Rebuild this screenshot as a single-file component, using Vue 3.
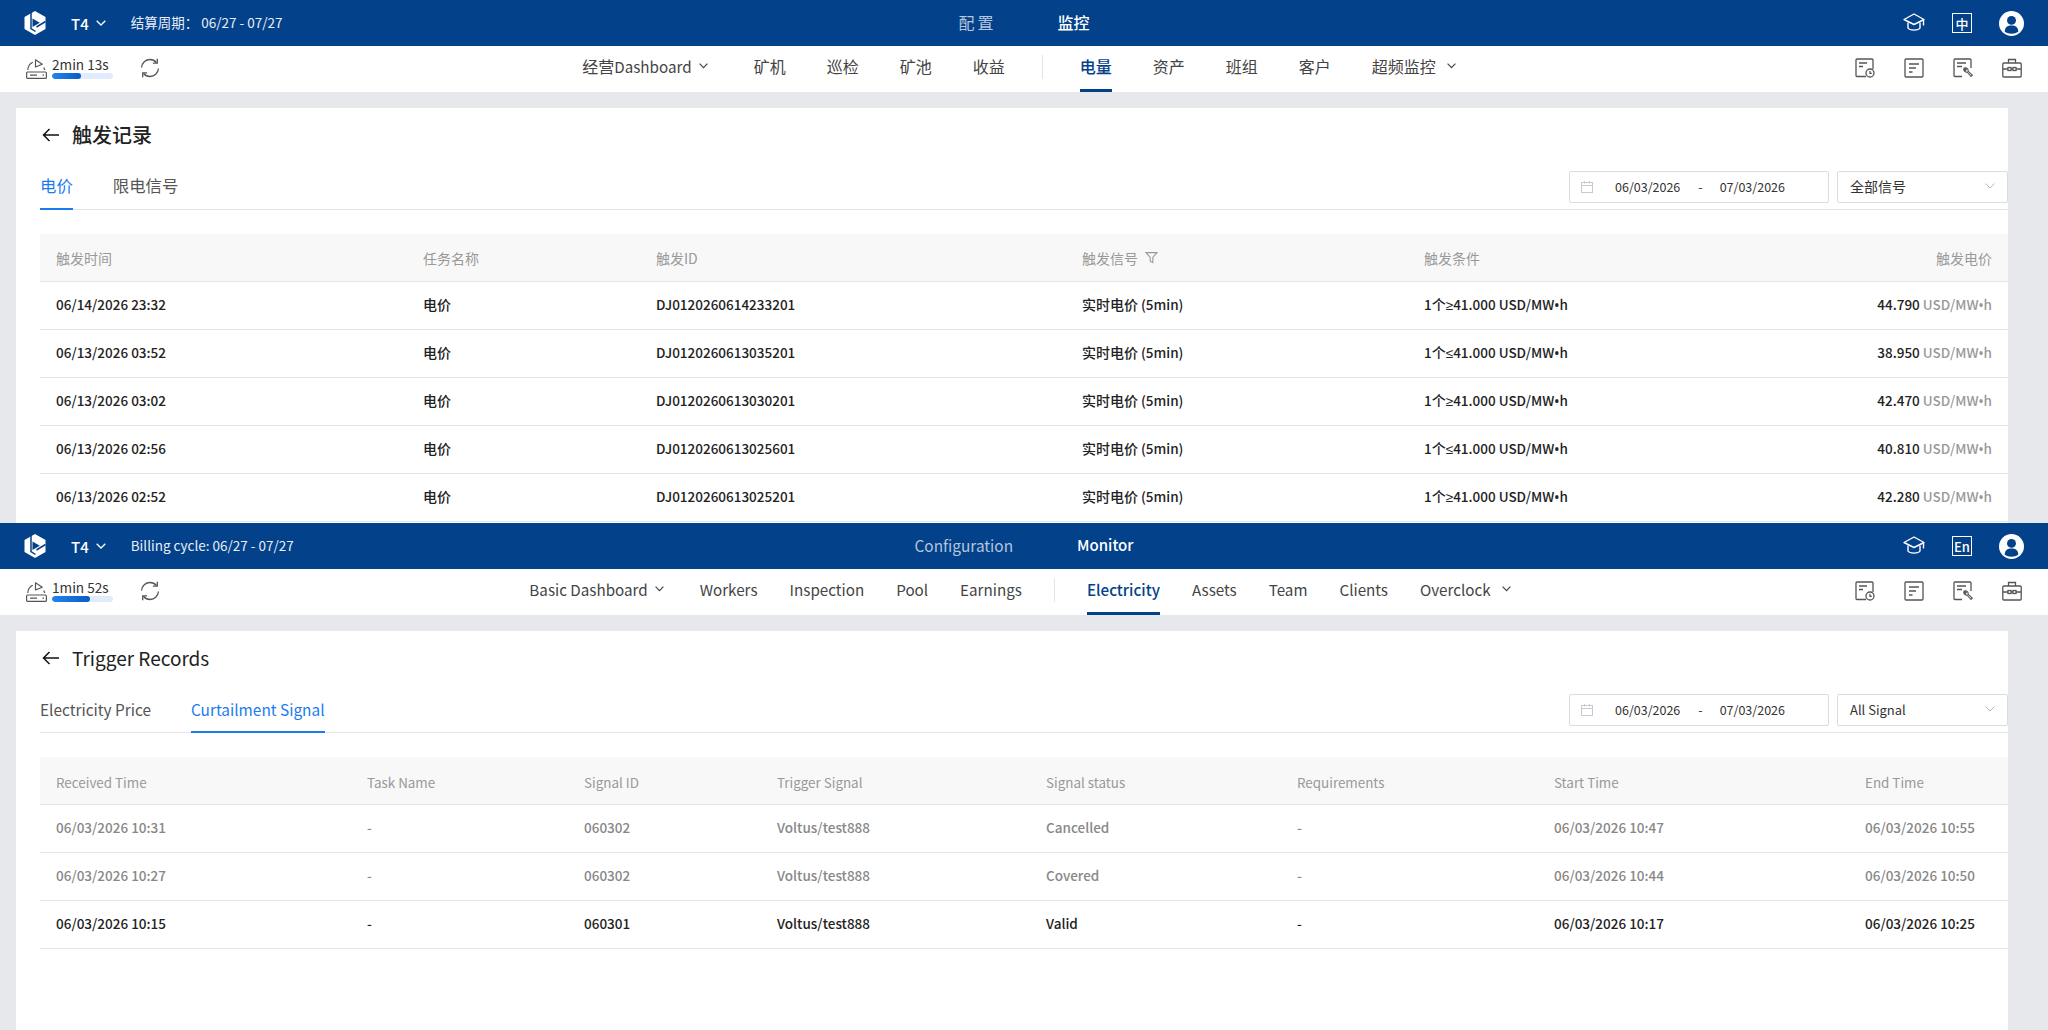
<script setup>
const navIcons = ['clock', 'list', 'wrench', 'case']

const pricePanel = {
  key: 'zh',
  billing: '结算周期： 06/27 - 07/27',
  lang: '中',
  timer: '2min 13s',
  progress: 47,
  topTabs: ['配置', '监控'],
  navLeft: [
    { label: '经营Dashboard', arrow: true },
    { label: '矿机' },
    { label: '巡检' },
    { label: '矿池' },
    { label: '收益' }
  ],
  navRight: [
    { label: '电量', active: true },
    { label: '资产' },
    { label: '班组' },
    { label: '客户' },
    { label: '超频监控', arrow: true, wide: true }
  ],
  title: '触发记录',
  tabs: ['电价', '限电信号'],
  activeTab: 0,
  select: '全部信号',
  gridClass: 'grid-price',
  columns: ['触发时间', '任务名称', '触发ID', '触发信号', '触发条件', '触发电价'],
  filterCol: 3,
  rows: [
    { cells: ['06/14/2026 23:32', '电价', 'DJ0120260614233201', '实时电价 (5min)', '1个≥41.000 USD/MW•h'], price: '44.790' },
    { cells: ['06/13/2026 03:52', '电价', 'DJ0120260613035201', '实时电价 (5min)', '1个≤41.000 USD/MW•h'], price: '38.950' },
    { cells: ['06/13/2026 03:02', '电价', 'DJ0120260613030201', '实时电价 (5min)', '1个≥41.000 USD/MW•h'], price: '42.470' },
    { cells: ['06/13/2026 02:56', '电价', 'DJ0120260613025601', '实时电价 (5min)', '1个≤41.000 USD/MW•h'], price: '40.810' },
    { cells: ['06/13/2026 02:52', '电价', 'DJ0120260613025201', '实时电价 (5min)', '1个≥41.000 USD/MW•h'], price: '42.280' }
  ]
}

const signalPanel = {
  key: 'en',
  billing: 'Billing cycle: 06/27 - 07/27',
  lang: 'En',
  timer: '1min 52s',
  progress: 63,
  topTabs: ['Configuration', 'Monitor'],
  navLeft: [
    { label: 'Basic Dashboard', arrow: true },
    { label: 'Workers' },
    { label: 'Inspection' },
    { label: 'Pool' },
    { label: 'Earnings' }
  ],
  navRight: [
    { label: 'Electricity', active: true },
    { label: 'Assets' },
    { label: 'Team' },
    { label: 'Clients' },
    { label: 'Overclock', arrow: true, wide: true }
  ],
  title: 'Trigger Records',
  tabs: ['Electricity Price', 'Curtailment Signal'],
  activeTab: 1,
  select: 'All Signal',
  gridClass: 'grid-signal',
  columns: ['Received Time', 'Task Name', 'Signal ID', 'Trigger Signal', 'Signal status', 'Requirements', 'Start Time', 'End Time'],
  filterCol: -1,
  rows: [
    { muted: true, cells: ['06/03/2026 10:31', '-', '060302', 'Voltus/test888', 'Cancelled', '-', '06/03/2026 10:47', '06/03/2026 10:55'] },
    { muted: true, cells: ['06/03/2026 10:27', '-', '060302', 'Voltus/test888', 'Covered', '-', '06/03/2026 10:44', '06/03/2026 10:50'] },
    { cells: ['06/03/2026 10:15', '-', '060301', 'Voltus/test888', 'Valid', '-', '06/03/2026 10:17', '06/03/2026 10:25'] }
  ]
}

const panels = [pricePanel, signalPanel]

// the CJK font draws these symbols full width, and its han runs sit a bit larger than latin
const partClass = (p) => {
  if (/[≥≤•]/.test(p)) return 'sym'
  if (/[\u4e00-\u9fff]/.test(p)) return 'han'
  return ''
}
const parts = (text) => text.split(/([\u4e00-\u9fff]+|[≥≤•])/).filter(Boolean)
</script>

<template>
  <div class="page">
    <section v-for="panel in panels" :key="panel.key" class="panel" :class="'panel-' + panel.key">
      <header class="topbar">
        <div class="top-left">
          <svg class="logo" viewBox="0 0 22 24" width="22" height="24">
            <path fill="#fff" d="M11 0 21.500 6V18L11 24 0.500 18V6Z" />
            <path fill="#03418a" d="M8.500 7.500 15.800 11.800 8.500 16Z" />
            <path fill="none" stroke="#03418a" stroke-width="1.500" d="M7 0V17.500L11.500 20.500M21.500 10.500 12.500 16" />
          </svg>
          <span class="site">T4</span>
          <svg class="chev" viewBox="0 0 10 6" width="10" height="6"><path d="M0.700 0.700 5 5 9.300 0.700" fill="none" stroke="#fff" stroke-width="1.300" /></svg>
          <span class="billing">{{ panel.billing }}</span>
        </div>
        <nav class="top-tabs">
          <span v-for="(t, i) in panel.topTabs" :key="t" class="top-tab" :class="{ on: i === 1 }">{{ t }}</span>
        </nav>
        <div class="top-right">
          <svg viewBox="0 0 22 22" width="22" height="22" fill="none" stroke="#fff" stroke-width="1.400">
            <path d="M11 2 21 7.500 11 12.500 1 7.500Z" stroke-linejoin="round" />
            <path d="M5 10.500V16c1.500 2.800 10.500 2.800 12 0v-5.500" />
            <path d="M20.500 8v5.500" />
          </svg>
          <span class="lang">{{ panel.lang }}</span>
          <svg viewBox="0 0 24 24" width="25" height="25">
            <circle cx="12" cy="12" r="12" fill="#fff" />
            <circle cx="12" cy="9" r="4.300" fill="#03418a" />
            <path fill="#03418a" d="M5.500 20c0-4.200 2.500-6 6.500-6s6.500 1.800 6.500 6c-3.500 2.400-9.500 2.400-13 0Z" />
          </svg>
        </div>
      </header>

      <div class="subnav">
        <div class="sub-left">
          <svg class="server" viewBox="0 0 21 20" width="21" height="20" fill="none" stroke="#555" stroke-width="1.200">
            <path d="M1.800 11C2 7.500 3.800 4.500 6.800 3.200" />
            <path d="M9.500 0.800 16.300 5.200 9.500 8Z" stroke-linejoin="round" />
            <path d="M17.800 8.500 18.800 11" />
            <rect x="0.600" y="13" width="19.800" height="6.400" rx="1" />
            <path d="M4 16.200h7M16.500 16.200h1.500" />
          </svg>
          <div class="timer">
            <span class="timer-text">{{ panel.timer }}</span>
            <div class="bar"><div class="bar-fill" :style="{ width: panel.progress + '%' }"></div></div>
          </div>
          <svg class="refresh" viewBox="0 0 20 20" width="20" height="20" fill="none" stroke="#555" stroke-width="1.300">
            <path d="M1.500 9.500C2 5 5.500 1.500 10 1.500c2.600 0 4.800 1.100 6.400 3" />
            <path d="M17.300 0.800v4.400h-4.400" />
            <path d="M18.500 10.500C18 15 14.500 18.500 10 18.500c-2.600 0-4.800-1.100-6.400-3" />
            <path d="M2.700 19.200v-4.400h4.400" />
          </svg>
        </div>
        <nav class="main-nav">
          <span v-for="item in panel.navLeft" :key="item.label" class="nav-item" :class="{ first: item.arrow }">
            <span><span v-for="(p, k) in parts(item.label)" :key="k" :class="partClass(p)">{{ p }}</span></span>
            <svg v-if="item.arrow" viewBox="0 0 9 6" width="9" height="6"><path d="M0.600 0.700 4.500 4.600 8.400 0.700" fill="none" stroke="#444" stroke-width="1.200" /></svg>
          </span>
          <i class="nav-sep"></i>
          <span v-for="item in panel.navRight" :key="item.label" class="nav-item" :class="{ active: item.active, wide: item.wide }">
            <span><span v-for="(p, k) in parts(item.label)" :key="k" :class="partClass(p)">{{ p }}</span></span>
            <svg v-if="item.arrow" viewBox="0 0 9 6" width="9" height="6"><path d="M0.600 0.700 4.500 4.600 8.400 0.700" fill="none" stroke="#444" stroke-width="1.200" /></svg>
          </span>
        </nav>
        <div class="sub-right">
          <svg v-for="name in navIcons" :key="name" viewBox="0 0 20 20" width="20" height="20" fill="none" stroke="#555" stroke-width="1.300">
            <template v-if="name === 'clock'">
              <path d="M11 18.500H2a1 1 0 0 1-1-1V2a1 1 0 0 1 1-1h15a1 1 0 0 1 1 1v9" />
              <path d="M4 5h8M4 8.500h4" />
              <circle cx="15" cy="15" r="4" fill="#fff" />
              <path d="M15 13v2.300h1.800" />
            </template>
            <template v-else-if="name === 'list'">
              <rect x="1" y="1" width="18" height="18" rx="1" />
              <path d="M5 6h10M5 10h7M5 14h3.500" />
            </template>
            <template v-else-if="name === 'wrench'">
              <path d="M9 18.500H2a1 1 0 0 1-1-1V2a1 1 0 0 1 1-1h15a1 1 0 0 1 1 1v8" />
              <path d="M4 5h9M4 8.500h5" />
              <path d="M11 10.500a2.600 2.600 0 0 0 3 3.500l4 4.500 1.300-1.300-4.300-4a2.600 2.600 0 0 0-3.300-3.300l1.600 1.700-1 1Z" fill="#fff" stroke-width="1.100" />
            </template>
            <template v-else>
              <rect x="0.800" y="5" width="18.400" height="14" rx="1" />
              <path d="M6.500 5V1.500h7V5" />
              <path d="M1 11h5M14 11h5M9 11h2" />
              <rect x="6" y="9.500" width="3" height="3" />
              <rect x="11" y="9.500" width="3" height="3" />
            </template>
          </svg>
        </div>
      </div>

      <main class="content">
        <div class="card">
          <div class="title-row">
            <svg viewBox="0 0 18 14" width="18" height="14"><path d="M17 7H1.500M7.500 1 1.500 7l6 6" fill="none" stroke="#111" stroke-width="1.500" /></svg>
            <h1>{{ panel.title }}</h1>
          </div>

          <div class="tabs-row">
            <div class="tabs">
              <span v-for="(t, i) in panel.tabs" :key="t" class="tab" :class="{ active: i === panel.activeTab }">{{ t }}</span>
            </div>
            <div class="filters">
              <div class="date-box">
                <svg viewBox="0 0 12 12" width="12" height="12" fill="none" stroke="#c6cbd2">
                  <rect x="0.500" y="1.500" width="11" height="10" />
                  <path d="M0.500 4.500h11M3.500 0v2.500M8.500 0v2.500" />
                </svg>
                <span>06/03/2026</span>
                <span class="dash">-</span>
                <span>07/03/2026</span>
              </div>
              <div class="select-box">
                <span>{{ panel.select }}</span>
                <svg viewBox="0 0 10 6" width="10" height="6"><path d="M0.500 0.500 5 5 9.500 0.500" fill="none" stroke="#b5b9bf" /></svg>
              </div>
            </div>
          </div>

          <div class="table" :class="panel.gridClass">
            <div class="tr th-row">
              <div v-for="(c, i) in panel.columns" :key="c" class="th">
                {{ c }}
                <svg v-if="i === panel.filterCol" viewBox="0 0 12 12" width="13" height="13">
                  <path d="M1 1.500h10L7.200 6v4.800L4.800 9.500V6Z" fill="none" stroke="#999" />
                </svg>
              </div>
            </div>
            <div v-for="(row, r) in panel.rows" :key="r" class="tr" :class="{ muted: row.muted }">
              <div v-for="(c, i) in row.cells" :key="i" class="td">
                <span v-for="(p, k) in parts(c)" :key="k" :class="partClass(p)">{{ p }}</span>
              </div>
              <div v-if="row.price" class="td">{{ row.price }} <span class="unit">USD/MW<span class="sym">•</span>h</span></div>
            </div>
          </div>
        </div>
      </main>
    </section>
  </div>
</template>

<style>
html, body { margin: 0; background: #e7e8ec; }
</style>

<style scoped>
.page {
  width: 2048px;
  height: 1030px;
  overflow: hidden;
  font-family: "Noto Sans CJK SC", "Noto Sans", sans-serif;
  color: #222;
}
.panel { overflow: hidden; background: #e7e8ec; }
.panel-zh { height: 523px; }
.panel-en { height: 507px; }

.topbar {
  height: 46px;
  background: #03418a;
  color: #fff;
  display: grid;
  grid-template-columns: 1fr auto 1fr;
  align-items: center;
  padding: 0 24px;
}
.top-left { display: flex; align-items: center; }
.site { margin-left: 25px; font-size: 15px; font-weight: 500; }
.chev { margin-left: 7px; }
.billing { margin-left: 25px; padding-bottom: 2px; font-size: 13.500px; color: #e8eef6; }
.top-tabs { display: flex; gap: 64px; padding-bottom: 2px; }
.top-tab { color: #b4c6dd; }
.top-tab.on { color: #fff; font-weight: 500; }
.panel-zh .top-tab { font-size: 16px; }
.panel-zh .top-tab:first-child { letter-spacing: 3px; margin-right: -3px; }
.panel-en .top-tab { font-size: 15.400px; }
.panel-en .top-tab.on { font-size: 15px; }
.top-right { display: flex; align-items: center; justify-content: flex-end; gap: 27px; }
.lang {
  width: 20px;
  height: 20px;
  border: 1px solid #fff;
  display: flex;
  align-items: center;
  justify-content: center;
  font-size: 13px;
  font-weight: 500;
  box-sizing: border-box;
}

.subnav {
  height: 46px;
  background: #fff;
  display: grid;
  grid-template-columns: 1fr auto 1fr;
  align-items: center;
  padding: 0 26px;
}
.sub-left { display: flex; align-items: center; }
.server { margin-bottom: 1px; }
.timer { margin: 0 0 4px 5px; width: 61px; display: flex; flex-direction: column; }
.timer-text { font-size: 13.600px; line-height: 16px; white-space: nowrap; color: #333; }
.bar { height: 6px; border-radius: 3px; background: #e0ebfb; margin-top: 1px; overflow: hidden; }
.bar-fill { height: 100%; border-radius: 3px; background: linear-gradient(90deg, #2384f0, #0a5cc4); }
.refresh { margin: 0 0 2px 27px; }

.main-nav { display: flex; align-items: center; height: 46px; transform: translateX(-4px); }
.panel-zh .main-nav { gap: 41px; transform: translateX(-5px); }
.panel-en .main-nav { gap: 32px; }
.nav-item.first { margin-right: 4px; }
.panel-zh .nav-item.first { margin-right: 5px; }
.nav-item {
  position: relative;
  height: 46px;
  box-sizing: border-box;
  padding-bottom: 6px;
  display: flex;
  align-items: center;
  gap: 7px;
  font-size: 15.200px;
  color: #444;
  white-space: nowrap;
}
.nav-item .han { font-size: 16px; }
.nav-item.wide { gap: 11px; }
.nav-item.active { color: #03418a; font-weight: 500; }
.nav-item.active::after {
  content: "";
  position: absolute;
  left: 0;
  right: 0;
  bottom: 0;
  height: 3px;
  background: #03418a;
}
.nav-sep { width: 1px; height: 24px; margin-bottom: 4px; background: #e3e4e8; }
.panel-zh .nav-sep { margin-left: -4px; margin-right: -4px; }

.sub-right { display: flex; justify-content: flex-end; gap: 29px; padding-bottom: 2px; }

.content { padding: 16px 40px 0 16px; }
.card { background: #fff; padding: 0 0 0 24px; height: 600px; }
.title-row { height: 54px; display: flex; align-items: center; gap: 12px; }
.title-row svg { margin-left: 2px; }
h1 { margin: 0; padding-bottom: 2px; font-size: 20px; color: #222; }
.panel-zh h1 { font-weight: 500; }
.panel-en h1 { font-size: 19px; font-weight: 400; }

.tabs-row {
  height: 48px;
  box-sizing: border-box;
  border-bottom: 1px solid #e4e6ea;
  display: flex;
  justify-content: space-between;
  margin-bottom: 24px;
}
.tabs { display: flex; gap: 40px; }
.tab {
  height: 48px;
  box-sizing: border-box;
  line-height: 48px;
  color: #555;
}
.panel-zh .tab { font-size: 16.400px; line-height: 46px; }
.panel-en .tab { font-size: 15.400px; }
.tab.active { color: #1a7cf0; border-bottom: 2px solid #1a7cf0; }

.filters { display: flex; gap: 8px; height: 32px; margin-top: 9px; font-size: 12.500px; color: #333; }
.date-box, .select-box {
  box-sizing: border-box;
  border: 1px solid #d9dce1;
  border-radius: 2px;
  display: flex;
  align-items: center;
  height: 32px;
  padding-bottom: 2px;
}
.date-box { width: 260px; padding-left: 11px; }
.date-box svg { margin-right: 22px; margin-top: 2px; }
.dash { margin: 0 17px 0 18px; }
.select-box { width: 171px; padding-left: 12px; padding-right: 12px; justify-content: space-between; }
.panel-zh .select-box { font-size: 14px; }
.panel-en .select-box { font-size: 13px; }

.tr {
  display: grid;
  height: 48px;
  box-sizing: border-box;
  border-bottom: 1px solid #e5e5e5;
  align-items: center;
  font-size: 13.500px;
  font-weight: 500;
  color: #222;
}
.grid-price .tr { grid-template-columns: 367px 233px 426px 342px 200px 1fr; }
.grid-signal .tr { grid-template-columns: 311px 217px 193px 269px 251px 257px 311px 159px; }
.th, .td { padding-left: 16px; white-space: nowrap; }
.th { display: flex; align-items: center; gap: 7px; }
.td { padding-bottom: 4px; }
.grid-price .th:last-child, .grid-price .td:last-child { justify-content: flex-end; text-align: right; padding-right: 16px; padding-left: 0; }
.th-row { background: #f8f8f8; color: #999; font-weight: 400; }
.grid-price .th { font-size: 14px; }
.grid-signal .th { font-size: 13.400px; padding-top: 2px; }
.muted { color: #888; }
.han { font-size: 14px; }
.sym { font-family: "Noto Sans", sans-serif; }
.unit { color: #999; }
</style>
